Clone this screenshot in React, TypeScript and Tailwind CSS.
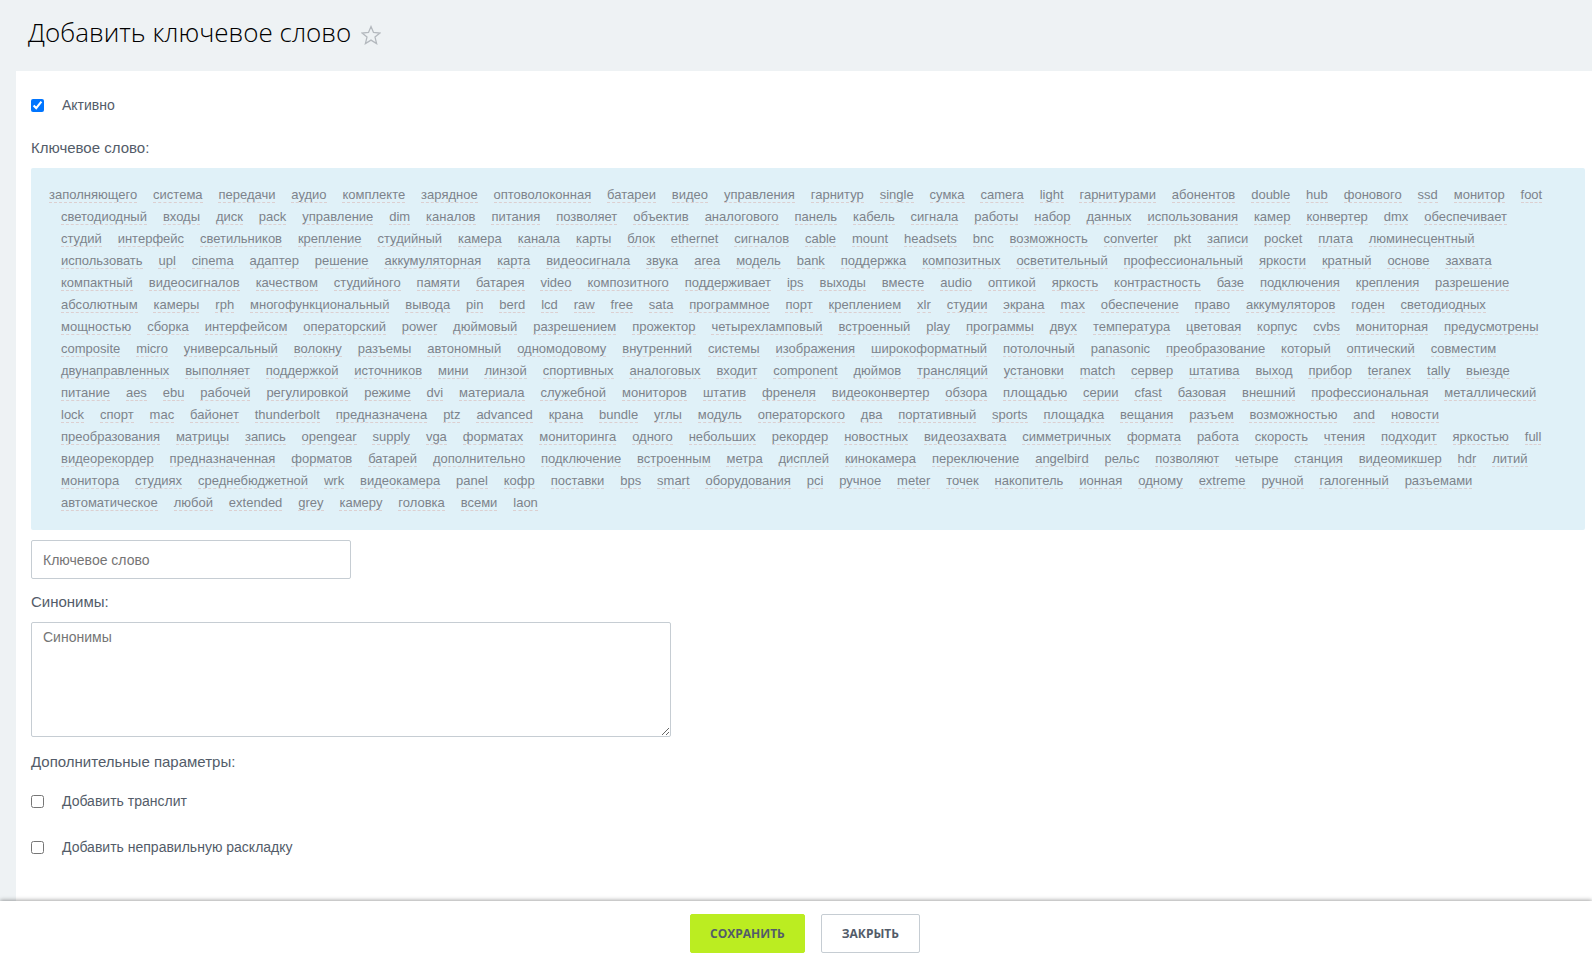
import { useState } from "react";

const KEYWORDS = `
заполняющего система передачи аудио комплекте зарядное оптоволоконная батареи видео управления гарнитур single сумка camera light гарнитурами абонентов double hub фонового ssd монитор foot
светодиодный входы диск pack управление dim каналов питания позволяет объектив аналогового панель кабель сигнала работы набор данных использования камер конвертер dmx обеспечивает
студий интерфейс светильников крепление студийный камера канала карты блок ethernet сигналов cable mount headsets bnc возможность converter pkt записи pocket плата люминесцентный
использовать upl cinema адаптер решение аккумуляторная карта видеосигнала звука area модель bank поддержка композитных осветительный профессиональный яркости кратный основе захвата
компактный видеосигналов качеством студийного памяти батарея video композитного поддерживает ips выходы вместе audio оптикой яркость контрастность базе подключения крепления разрешение
абсолютным камеры rph многофункциональный вывода pin berd lcd raw free sata программное порт креплением xlr студии экрана max обеспечение право аккумуляторов годен светодиодных
мощностью сборка интерфейсом операторский power дюймовый разрешением прожектор четырехламповый встроенный play программы двух температура цветовая корпус cvbs мониторная предусмотрены
composite micro универсальный волокну разъемы автономный одномодовому внутренний системы изображения широкоформатный потолочный panasonic преобразование который оптический совместим
двунаправленных выполняет поддержкой источников мини линзой спортивных аналоговых входит component дюймов трансляций установки match сервер штатива выход прибор teranex tally выезде
питание aes ebu рабочей регулировкой режиме dvi материала служебной мониторов штатив френеля видеоконвертер обзора площадью серии cfast базовая внешний профессиональная металлический
lock спорт mac байонет thunderbolt предназначена ptz advanced крана bundle углы модуль операторского два портативный sports площадка вещания разъем возможностью and новости
преобразования матрицы запись opengear supply vga форматах мониторинга одного небольших рекордер новостных видеозахвата симметричных формата работа скорость чтения подходит яркостью full
видеорекордер предназначенная форматов батарей дополнительно подключение встроенным метра дисплей кинокамера переключение angelbird рельс позволяют четыре станция видеомикшер hdr литий
монитора студиях среднебюджетной wrk видеокамера panel кофр поставки bps smart оборудования pci ручное meter точек накопитель ионная одному extreme ручной галогенный разъемами
автоматическое любой extended grey камеру головка всеми laon
`
  .trim()
  .split(/\s+/);

function CheckRow({
  id,
  label,
  defaultChecked,
}: {
  id: string;
  label: string;
  defaultChecked?: boolean;
}) {
  return (
    <div className="flex h-[45px] items-center gap-[18px]">
      <input id={id} type="checkbox" defaultChecked={defaultChecked} className="h-[13px] w-[13px]" />
      <label htmlFor={id} className="pb-0.5 text-sm">
        {label}
      </label>
    </div>
  );
}

export default function App() {
  const [keyword, setKeyword] = useState("");
  const [synonyms, setSynonyms] = useState("");

  return (
    <div className="flex min-h-screen flex-col bg-[#eef2f4] font-['Liberation_Sans',Arial,sans-serif] text-[#535c69]">
      {/* Header */}
      <header className="flex h-[71px] items-center gap-[10px] pl-7 pb-1.5">
        <h1 className="font-['Open_Sans',sans-serif] text-[26px] font-light text-black">
          Добавить ключевое слово
        </h1>
        <button type="button" aria-label="В избранное" className="mt-1 text-[#b4b9be]">
          <svg width="20" height="20" viewBox="0 0 20 20" fill="none" stroke="currentColor" strokeWidth="1.3">
            <path d="M10 1.6l2.5 5.9 6.4.5-4.9 4.1 1.6 6.4-5.6-3.4-5.6 3.4L6 12.1 1.1 8l6.4-.5z" />
          </svg>
        </button>
      </header>

      {/* Form */}
      <main className="ml-4 flex-1 bg-white pt-3 pr-[7px] pb-7 pl-[15px]">
        <CheckRow id="active" label="Активно" defaultChecked />

        <label htmlFor="keyword" className="mt-[10px] block text-[15px] leading-5">
          Ключевое слово:
        </label>
        <div className="mt-[10px] rounded-xs bg-[#e0f1f8] pt-[15px] pr-[34px] pb-[17px] pl-[18px] text-sm leading-[22px]">
          {KEYWORDS.map((word, i) => (
            <span key={i}>
              <a
                href="#keyword"
                onClick={() => setKeyword(word)}
                className={`border-b border-dashed border-[#dccfd0] text-[13px] leading-5 text-[#7d838b] ${i > 0 ? "ml-3" : ""}`}
              >
                {word}
              </a>{" "}
            </span>
          ))}
        </div>
        <input
          id="keyword"
          type="text"
          value={keyword}
          onChange={(e) => setKeyword(e.target.value)}
          placeholder="Ключевое слово"
          className="mt-[10px] block h-[39px] w-80 rounded-xs border border-[#c6cdd3] px-[11px] text-sm placeholder:text-[#757575]"
        />

        <label htmlFor="synonyms" className="mt-[13px] block text-[15px] leading-5">
          Синонимы:
        </label>
        <textarea
          id="synonyms"
          value={synonyms}
          onChange={(e) => setSynonyms(e.target.value)}
          placeholder="Синонимы"
          className="mt-[10px] block h-[115px] w-[640px] rounded-xs border border-[#c6cdd3] px-[11px] py-1 text-sm placeholder:text-[#757575]"
        />

        <fieldset className="mt-[15px]">
          <legend className="text-[15px] leading-5">Дополнительные параметры:</legend>
          <div className="mt-[7px] flex flex-col gap-px">
            <CheckRow id="translit" label="Добавить транслит" />
            <CheckRow id="layout" label="Добавить неправильную раскладку" />
          </div>
        </fieldset>
      </main>

      {/* Bottom bar */}
      <footer className="sticky bottom-0 flex h-16 items-center justify-center gap-4 bg-white pl-[18px] font-['Open_Sans',sans-serif] text-xs font-bold shadow-[0_-1px_4px_rgba(0,0,0,0.35)]">
        <button type="button" className="h-[39px] rounded-xs border border-[#bbed21] bg-[#bbed21] px-[19px] pt-0.5">
          СОХРАНИТЬ
        </button>
        <button type="button" className="h-[39px] rounded-xs border border-[#c6cdd3] bg-white px-5 pt-0.5">
          ЗАКРЫТЬ
        </button>
      </footer>
    </div>
  );
}
